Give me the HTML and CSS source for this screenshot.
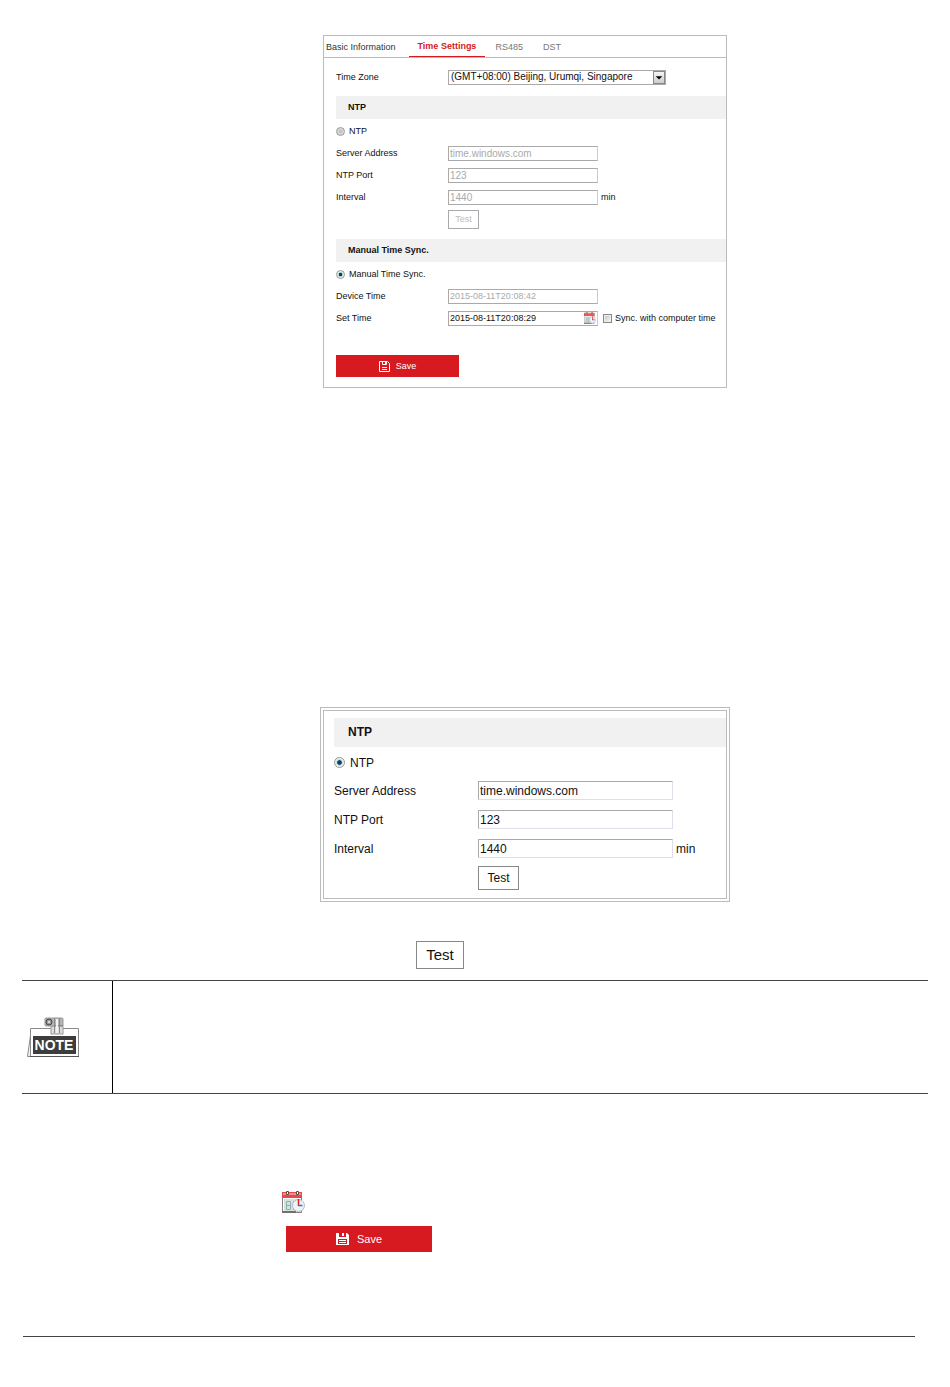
FILE: index.html
```html
<!DOCTYPE html>
<html lang="en">
<head>
    <meta charset="UTF-8">
    <meta name="viewport" content="width=device-width, initial-scale=1.0">
    <title>Time Settings</title>
    <link rel="stylesheet" href="styles.css">
</head>
<body>
    <!-- shared icons -->
    <svg class="sprite" aria-hidden="true">
        <symbol id="icon-save" viewBox="0 0 13 12">
            <path fill="#fff" fill-rule="evenodd" d="M0 0h11l2 2v10H0zM3 0v4h7V0H8v3H6V0zM2 6v5h9V6z"/>
            <path fill="#fff" d="M3 7h7v1H3zM3 9h7v1H3z"/>
        </symbol>
        <symbol id="icon-save-small" viewBox="0 0 11 11">
            <path fill="none" stroke="#fff" d="M.5.5h8l2 2v8H.5zM3.500.5v3h4v-3"/>
            <path fill="#fff" d="M3 6h5v1H3zM3 8h5v1H3zM6 1h1v2H6z"/>
        </symbol>
        <symbol id="icon-calendar" viewBox="0 0 23 22">
            <path fill="#fff" stroke="#8b7f7f" d="M.5 2.500h19v19H.5z"/>
            <path fill="#e5474b" d="M0 1h20v6H0z"/>
            <path fill="#f58c8c" d="M1 2h18v2H1z"/>
            <path fill="#fff" stroke="#6a4242" d="M4.500.5h2v3h-2zM14.500.5h2v3h-2z"/>
            <path fill="#d5e3e0" d="M2 8h16v12H2z"/>
            <path fill="none" stroke="#8fb0aa" d="M4.500 10.500h4v8h-4zM4 14.500h5M11.500 10v9"/>
            <path fill="#7a6c6c" d="M0 20h14v2H0z"/>
            <circle cx="16.500" cy="14.500" r="6" fill="#f0f2f5" stroke="#b5b9be"/>
            <path fill="none" stroke="#f01818" stroke-width="1.500" d="M16.500 8v7"/>
            <path fill="none" stroke="#1878f0" stroke-width="1.500" d="M16 14.500h4.500"/>
        </symbol>
    </svg>

    <main class="page">
        <form class="panel">
            <nav class="tabs">
                <a href="#basic">Basic Information</a>
                <a href="#time" class="active">Time Settings</a>
                <a href="#rs485">RS485</a>
                <a href="#dst">DST</a>
            </nav>
            <div class="panel-body">
                <div class="row zone">
                    <label for="zone">Time Zone</label>
                    <div class="select">
                        <select id="zone">
                            <option>(GMT+08:00) Beijing, Urumqi, Singapore</option>
                        </select>
                        <svg viewBox="0 0 12 13" aria-hidden="true"><path d="M2 5h8L6 9z"/></svg>
                    </div>
                </div>

                <h2>NTP</h2>
                <div class="choice">
                    <input type="radio" id="mode-ntp" name="mode">
                    <label for="mode-ntp">NTP</label>
                </div>
                <div class="row">
                    <label for="server">Server Address</label>
                    <input type="text" id="server" value="time.windows.com" disabled>
                </div>
                <div class="row">
                    <label for="port">NTP Port</label>
                    <input type="text" id="port" value="123" disabled>
                </div>
                <div class="row">
                    <label for="interval">Interval</label>
                    <input type="text" id="interval" value="1440" disabled>
                    <span>min</span>
                </div>
                <div class="row">
                    <button type="button" class="test" disabled>Test</button>
                </div>

                <h2>Manual Time Sync.</h2>
                <div class="choice">
                    <input type="radio" id="mode-manual" name="mode" checked>
                    <label for="mode-manual">Manual Time Sync.</label>
                </div>
                <div class="row">
                    <label for="device">Device Time</label>
                    <input type="text" id="device" class="time" value="2015-08-11T20:08:42" disabled>
                </div>
                <div class="row">
                    <label for="set">Set Time</label>
                    <div class="picker">
                        <input type="text" id="set" class="time" value="2015-08-11T20:08:29">
                        <button type="button" aria-label="Pick time"><svg><use href="#icon-calendar"/></svg></button>
                    </div>
                    <div class="sync">
                        <input type="checkbox" id="sync">
                        <label for="sync">Sync. with computer time</label>
                    </div>
                </div>
                <button type="button" class="save"><svg><use href="#icon-save-small"/></svg>Save</button>
            </div>
        </form>

        <form class="panel large">
            <div class="panel-body">
                <h2>NTP</h2>
                <div class="choice">
                    <input type="radio" id="ntp-on" name="ntp" checked>
                    <label for="ntp-on">NTP</label>
                </div>
                <div class="row">
                    <label for="server2">Server Address</label>
                    <input type="text" id="server2" value="time.windows.com">
                </div>
                <div class="row">
                    <label for="port2">NTP Port</label>
                    <input type="text" id="port2" value="123">
                </div>
                <div class="row">
                    <label for="interval2">Interval</label>
                    <input type="text" id="interval2" value="1440">
                    <span>min</span>
                </div>
                <div class="row">
                    <button type="button" class="test">Test</button>
                </div>
            </div>
        </form>

        <button type="button" class="test test-sample">Test</button>

        <section class="note">
            <div class="note-icon">
                <svg viewBox="0 0 52 41" role="img" aria-label="Note">
                    <path fill="#f4f4f4" stroke="#8a8a8a" d="M4.500 11.500L.5 39.500H4"/>
                    <path fill="#fff" stroke="#8a8a8a" d="M3.500 11.500h48v28h-48z"/>
                    <path stroke="#555" d="M3 39.500h49"/>
                    <path fill="#3d3d3d" d="M6 19h43v18H6z"/>
                    <rect x="24" y="9" width="12" height="8" fill="#ddd" stroke="#999"/>
                    <rect x="18" y="1" width="18" height="8" rx="1" fill="#b5b5b5" stroke="#999"/>
                    <circle cx="22" cy="5" r="3" fill="#999" stroke="#444"/>
                    <circle cx="22" cy="5" r="1" fill="#eee"/>
                    <path stroke="#888" d="M27.500 1v15M32.500 1v15M27 8.500h9"/>
                    <path stroke="#f2f2f2" stroke-width="2" d="M30 2v14"/>
                    <text x="27" y="33" text-anchor="middle">NOTE</text>
                </svg>
            </div>
            <div class="note-text"></div>
        </section>

        <div class="steps">
            <svg class="calendar"><use href="#icon-calendar"/></svg>
            <button type="button" class="save"><svg><use href="#icon-save"/></svg>Save</button>
        </div>

        <hr>
    </main>
</body>
</html>
```

FILE: styles.css
```css
* {
    box-sizing: border-box;
}
body {
    margin: 0;
    background: white;
    color: #111;
    font: 9px/12px "Liberation Sans", Arial, sans-serif;
}
.page {
    padding: 35px 22px 50px;
}
.sprite {
    position: absolute;
    width: 0;
    height: 0;
}
input, select, button {
    font: inherit;
    color: inherit;
    margin: 0;
    border-radius: 0;
}

/* settings panel */
.panel {
    width: 100%;
    max-width: 404px;
    margin-left: 301px;
    border: 1px solid #bbb;
}
.tabs {
    display: flex;
    height: 22px;
    border-bottom: 1px solid #bbb;
}
.tabs a {
    padding: 5px 10px 0;
    color: #777;
    text-decoration: none;
}
.tabs a:first-child {
    padding-left: 2px;
    margin-right: 3px;
    color: #333;
}
.tabs .active {
    padding: 4px 9px 0;
    border-bottom: 1px solid #d71920;
    color: #d71920;
    font-weight: bold;
}
.panel-body {
    padding: 9px 0 10px 12px;
}
h2 {
    margin: 9px 0 1px;
    padding: 0 12px;
    background: #f1f1f1;
    font-size: 9px;
    line-height: 23px;
}
.row {
    display: grid;
    grid-template-columns: 112px 150px 1fr;
    align-items: center;
    height: 22px;
}
.row.zone {
    grid-template-columns: 112px 218px;
    height: 20px;
}
.row span {
    padding-left: 3px;
}
.choice {
    display: flex;
    align-items: center;
    gap: 4px;
    height: 22px;
}
input[type="text"] {
    width: 100%;
    height: 15px;
    padding: 0 1px;
    border: 1px solid #aaa;
    border-right-color: #ccc;
    background: white;
    font-size: 10px;
}
input.time {
    font-size: 9px;
}
input:disabled {
    color: #aaa;
}
input[type="radio"] {
    appearance: none;
    width: 9px;
    height: 9px;
    border: 1px solid #999;
    border-radius: 50%;
    background: radial-gradient(#bbb, #eee);
}
input[type="radio"]:checked {
    background: radial-gradient(circle, #123f66 0 30%, #9cc 40%, #eee 55%);
}
input[type="checkbox"] {
    appearance: none;
    width: 9px;
    height: 9px;
    border: 1px solid #888;
    background: linear-gradient(135deg, #bbb, #fff);
    box-shadow: inset 0 0 0 1px #eee;
}
.select {
    position: relative;
}
.select select {
    display: block;
    appearance: none;
    width: 100%;
    height: 15px;
    padding: 0 14px 0 2px;
    border: 1px solid #aaa;
    background: white;
    font-size: 10px;
}
.select svg {
    position: absolute;
    top: 1px;
    right: 1px;
    width: 12px;
    height: 13px;
    border: 1px solid #888;
    background: linear-gradient(#f5f5f5, #ccc);
    pointer-events: none;
}
.picker {
    position: relative;
}
.picker input {
    display: block;
}
.picker button {
    position: absolute;
    top: 1px;
    right: 2px;
    padding: 0;
    border: 0;
    background: none;
    cursor: pointer;
}
.picker svg {
    display: block;
    width: 12px;
    height: 12px;
}
.sync {
    display: flex;
    align-items: center;
    gap: 3px;
    padding-left: 5px;
    white-space: nowrap;
}
.test {
    grid-column: 2;
    justify-self: start;
    width: 31px;
    height: 19px;
    padding: 0;
    border: 1px solid #888;
    background: white;
}
.test:disabled {
    border-color: #aaa;
    color: #bbb;
}
.save {
    display: flex;
    align-items: center;
    justify-content: center;
    gap: 6px;
    width: 123px;
    height: 22px;
    margin-top: 26px;
    padding: 0;
    border: 0;
    background: #d71920;
    color: white;
    cursor: pointer;
}
.save svg {
    width: 11px;
    height: 11px;
}

/* enlarged NTP panel */
.panel.large {
    max-width: 410px;
    margin: 319px 0 0 298px;
    border: 4px double #bbb;
    font-size: 12px;
}
.large .panel-body {
    padding: 7px 0 6px 10px;
}
.large h2 {
    margin: 0 0 2px;
    padding: 0 14px;
    font-size: 12px;
    line-height: 29px;
}
.large .row {
    grid-template-columns: 144px 195px 1fr;
    height: 29px;
}
.large .choice {
    height: 27px;
    gap: 5px;
}
.large input[type="text"] {
    height: 19px;
    border-color: #aaa #dde #dde #aaa;
    border-radius: 1px;
    font-size: 12px;
}
.large input[type="radio"] {
    width: 11px;
    height: 11px;
}
.large .test {
    width: 41px;
    height: 24px;
}
.test-sample {
    display: block;
    width: 48px;
    height: 28px;
    margin: 39px 0 11px 394px;
    font-size: 15px;
}

/* note box */
.note {
    display: flex;
    min-height: 114px;
    border-top: 1px solid #444;
    border-bottom: 1px solid #444;
}
.note-icon {
    display: flex;
    align-items: center;
    width: 91px;
    padding-left: 5px;
    border-right: 1px solid #000;
}
.note-icon svg {
    width: 52px;
    height: 41px;
}
.note-icon text {
    fill: white;
    font-size: 14px;
    font-weight: bold;
}
.note-text {
    flex: 1;
}

.steps {
    margin: 97px 0 84px 260px;
}
.calendar {
    display: block;
    width: 23px;
    height: 22px;
}
.steps .save {
    width: 146px;
    height: 26px;
    margin: 13px 0 0 4px;
    gap: 8px;
    font-size: 11px;
}
.steps .save svg {
    width: 13px;
    height: 12px;
}
hr {
    margin: 0 13px 0 1px;
    border: 0;
    border-top: 1px solid #444;
}
```
